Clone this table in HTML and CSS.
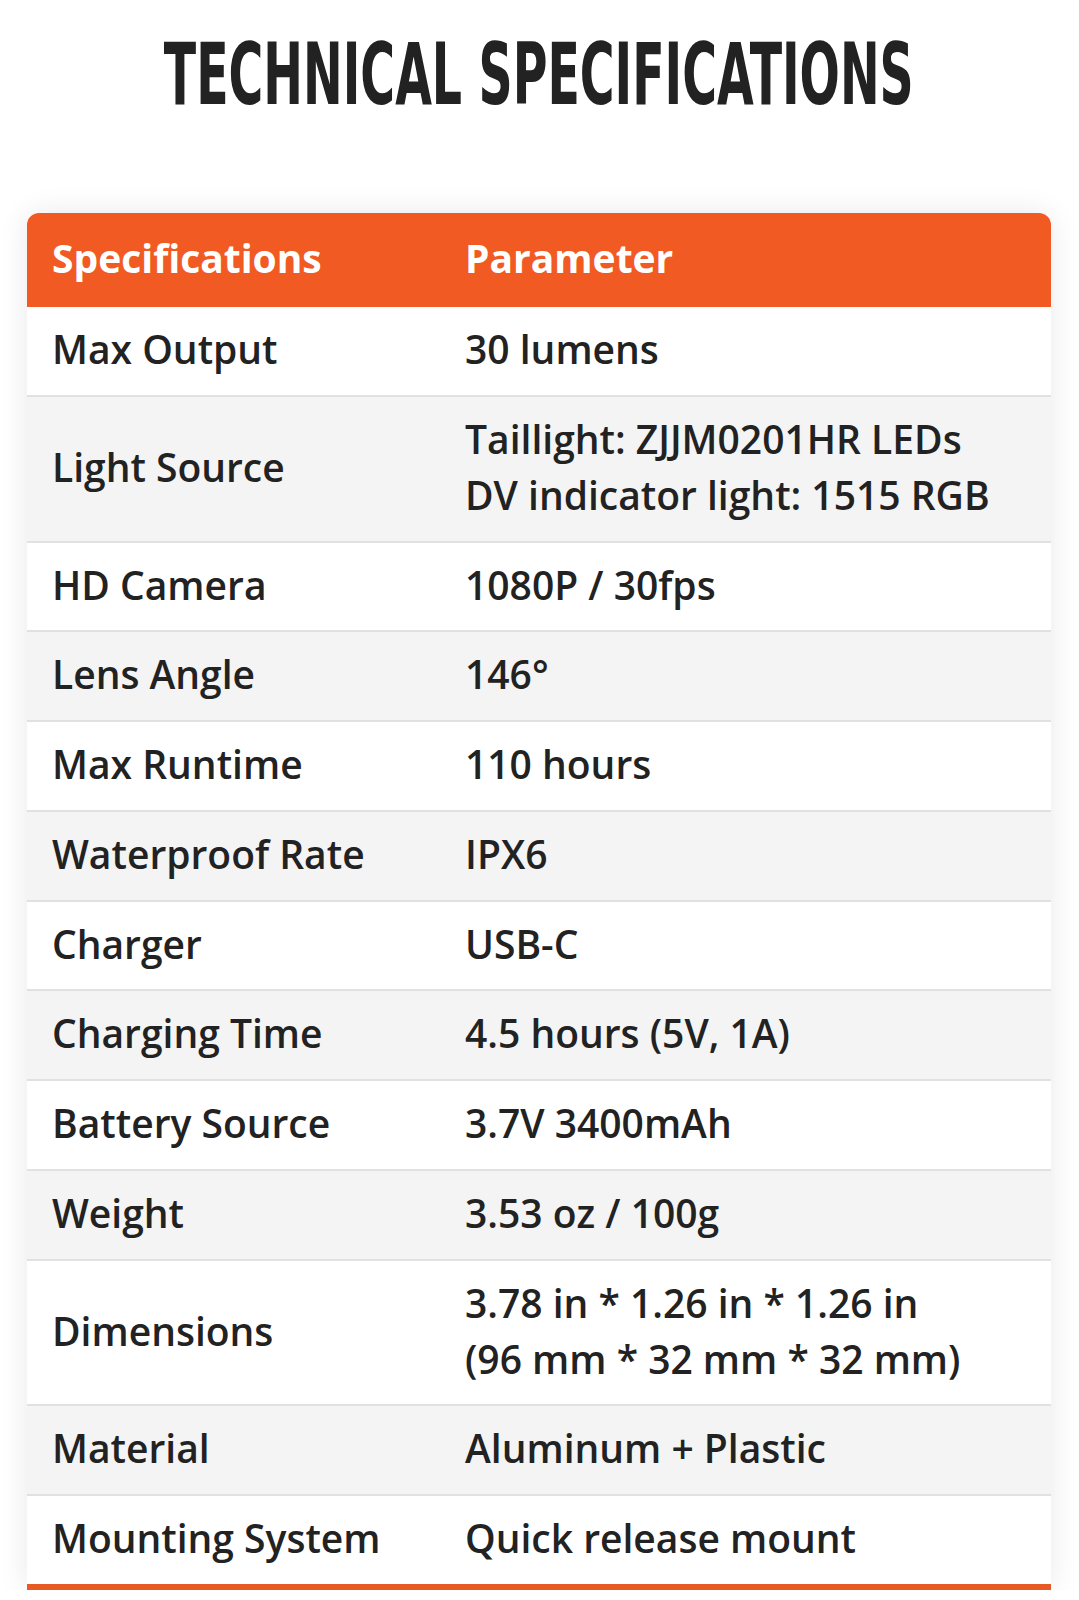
FILE: index.html
```html
<!DOCTYPE html>
<html lang="en">
<head>
<meta charset="utf-8">
<title>Technical Specifications</title>
<link rel="stylesheet" href="styles.css">
</head>
<body>
<main class="page">
  <h1 class="title"><span class="title-text">TECHNICAL SPECIFICATIONS</span></h1>
  <section class="spec-card">
    <div class="spec-row spec-head">
      <div class="cell">Specifications</div>
      <div class="cell">Parameter</div>
    </div>
    <div class="spec-row">
      <div class="cell">Max Output</div>
      <div class="cell">30 lumens</div>
    </div>
    <div class="spec-row alt">
      <div class="cell">Light Source</div>
      <div class="cell">Taillight: ZJJM0201HR LEDs<br>DV indicator light: 1515 RGB</div>
    </div>
    <div class="spec-row">
      <div class="cell">HD Camera</div>
      <div class="cell">1080P / 30fps</div>
    </div>
    <div class="spec-row alt">
      <div class="cell">Lens Angle</div>
      <div class="cell">146°</div>
    </div>
    <div class="spec-row">
      <div class="cell">Max Runtime</div>
      <div class="cell">110 hours</div>
    </div>
    <div class="spec-row alt">
      <div class="cell">Waterproof Rate</div>
      <div class="cell">IPX6</div>
    </div>
    <div class="spec-row">
      <div class="cell">Charger</div>
      <div class="cell">USB-C</div>
    </div>
    <div class="spec-row alt">
      <div class="cell">Charging Time</div>
      <div class="cell">4.5 hours (5V, 1A)</div>
    </div>
    <div class="spec-row">
      <div class="cell">Battery Source</div>
      <div class="cell">3.7V 3400mAh</div>
    </div>
    <div class="spec-row alt">
      <div class="cell">Weight</div>
      <div class="cell">3.53 oz / 100g</div>
    </div>
    <div class="spec-row">
      <div class="cell">Dimensions</div>
      <div class="cell">3.78 in * 1.26 in * 1.26 in<br>(96 mm * 32 mm * 32 mm)</div>
    </div>
    <div class="spec-row alt">
      <div class="cell">Material</div>
      <div class="cell">Aluminum + Plastic</div>
    </div>
    <div class="spec-row last">
      <div class="cell">Mounting System</div>
      <div class="cell">Quick release mount</div>
    </div>
  </section>
</main>
</body>
</html>
```

FILE: styles.css
```css
html, body {
  margin: 0;
  padding: 0;
  background: #ffffff;
}

.page {
  width: 1079px;
  padding: 0 28px 0 27px;
  box-sizing: border-box;
}

.title {
  margin: 0;
  padding-top: 25px;
  height: 213px;
  box-sizing: border-box;
  display: flex;
  justify-content: center;
  align-items: flex-start;
  font-family: "DejaVu Sans Condensed", "DejaVu Sans", sans-serif;
  font-weight: 700;
  font-size: 85px;
  line-height: 100px;
  color: #222222;
}

.title-text {
  display: block;
  flex: none;
  transform: scaleX(0.62);
  transform-origin: center;
  white-space: nowrap;
}

.spec-card {
  border-radius: 12px 12px 0 0;
  box-shadow: 0 0 30px rgba(0, 0, 0, 0.09);
  overflow: hidden;
  font-family: "Open Sans", sans-serif;
  font-weight: 600;
  font-size: 39px;
  color: #222222;
}

.spec-row {
  display: grid;
  grid-template-columns: 413px 1fr;
  background: #ffffff;
  border-bottom: 2px solid #e1e1e1;
}

.spec-row.alt {
  background: #f4f4f4;
}

.spec-row.last {
  border-bottom: 6px solid #e85a24;
}

.cell {
  padding: 14px 0 17.75px 25px;
  line-height: 56px;
  display: flex;
  flex-direction: column;
  justify-content: center;
}

.spec-head {
  background: #f15a22;
  color: #ffffff;
  font-weight: 700;
  border-bottom: none;
}

.spec-head .cell {
  padding-top: 17px;
  padding-bottom: 21px;
}
```
